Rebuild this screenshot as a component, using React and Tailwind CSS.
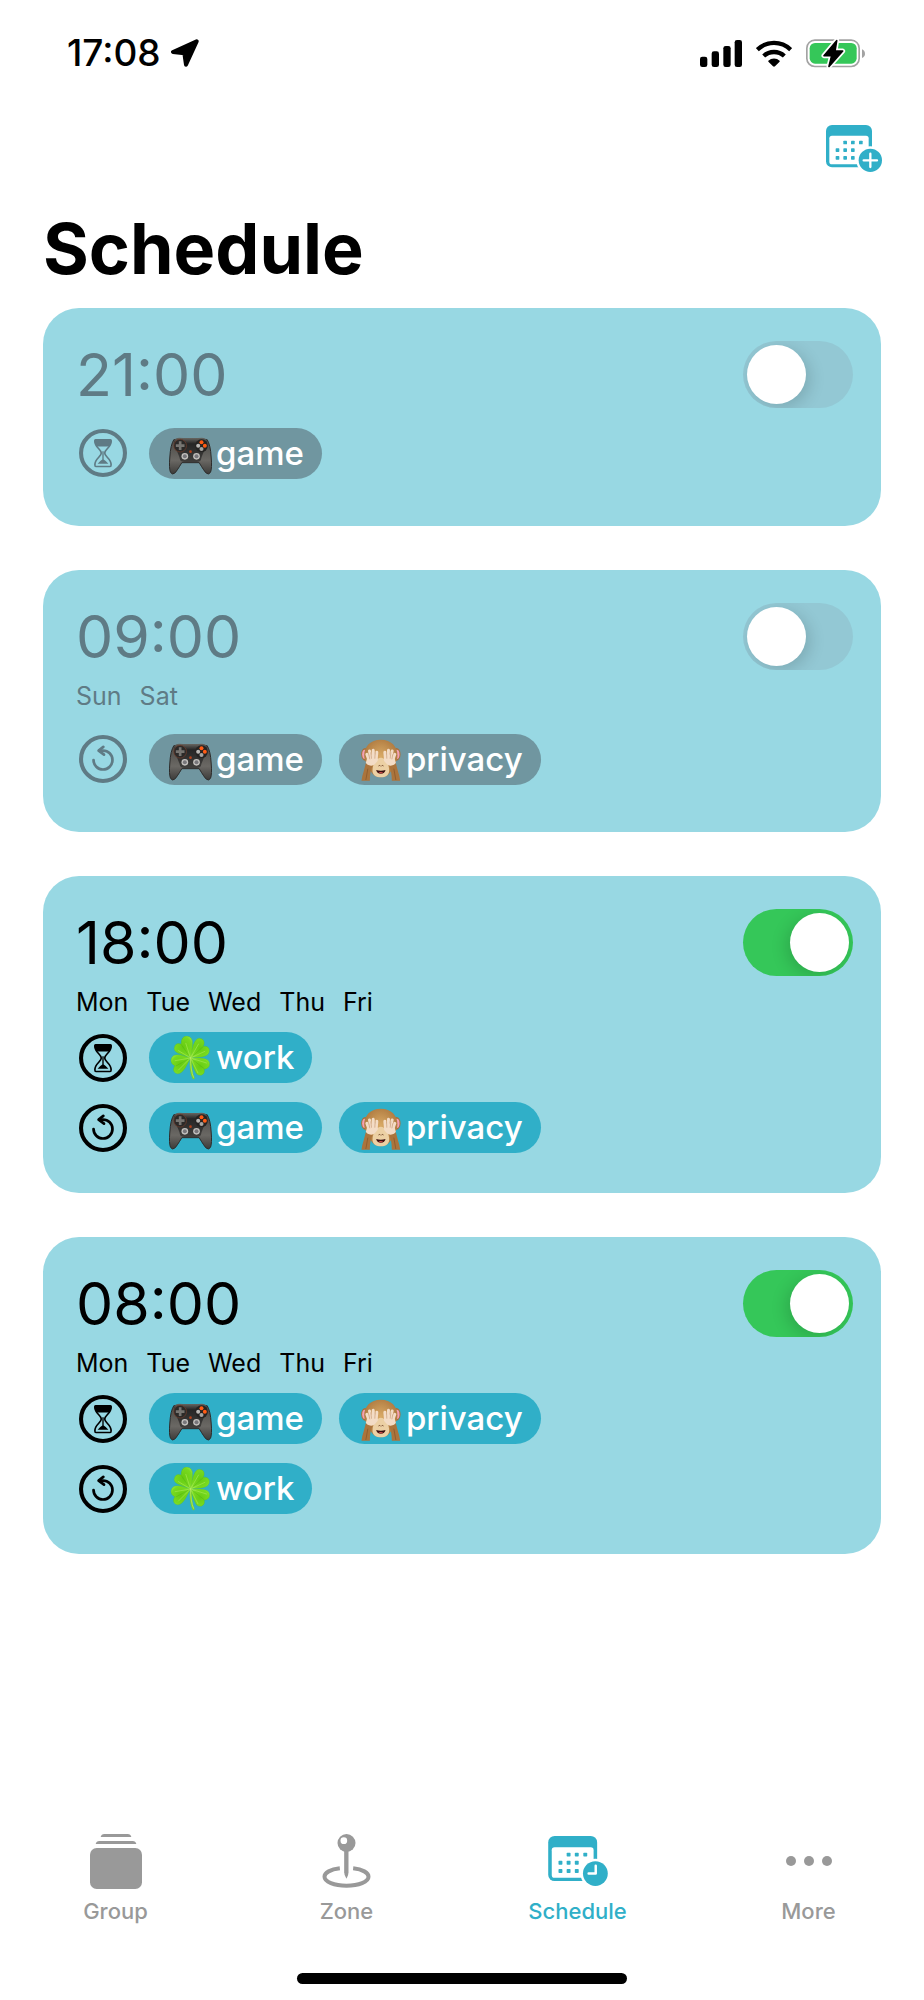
import { useState } from 'react'

const GROUPS = {
  game: { label: 'game', Icon: Gamepad },
  privacy: { label: 'privacy', Icon: Monkey },
  work: { label: 'work', Icon: Clover },
}

const SCHEDULES = [
  { time: '21:00', on: false, days: [], rules: [{ type: 'limit', groups: ['game'] }] },
  { time: '09:00', on: false, days: ['Sun', 'Sat'], rules: [{ type: 'reset', groups: ['game', 'privacy'] }] },
  {
    time: '18:00', on: true, days: ['Mon', 'Tue', 'Wed', 'Thu', 'Fri'],
    rules: [{ type: 'limit', groups: ['work'] }, { type: 'reset', groups: ['game', 'privacy'] }],
  },
  {
    time: '08:00', on: true, days: ['Mon', 'Tue', 'Wed', 'Thu', 'Fri'],
    rules: [{ type: 'limit', groups: ['game', 'privacy'] }, { type: 'reset', groups: ['work'] }],
  },
]

const TABS = [
  { name: 'Group', icon: <StackIcon /> },
  { name: 'Zone', icon: <PinIcon /> },
  { name: 'Schedule', icon: <CalendarIcon badge="clock" className="h-[50px] w-[60px]" /> },
  { name: 'More', icon: <DotsIcon /> },
]

export default function App() {
  const [items, setItems] = useState(SCHEDULES)
  const [tab, setTab] = useState('Schedule')

  function toggle(i) {
    setItems(items.map((s, n) => (n === i ? { ...s, on: !s.on } : s)))
  }

  return (
    <div className="flex min-h-screen flex-col bg-white font-['Inter',sans-serif] text-black">
      <StatusBar />
      <header>
        <div className="flex h-[84px] items-center justify-end px-[42px]">
          <button aria-label="Add schedule">
            <CalendarIcon badge="plus" className="h-[47px] w-[56px] text-[#30afc8]" />
          </button>
        </div>
        <h1 className="px-[43px] text-[70px] leading-[118px] font-bold">Schedule</h1>
      </header>

      <main className="flex flex-1 flex-col gap-11 px-[43px] pb-10">
        {items.map((s, i) => (
          <Card key={s.time} s={s} onToggle={() => toggle(i)} />
        ))}
      </main>

      <nav className="grid grid-cols-4">
        {TABS.map(t => (
          <button
            key={t.name}
            onClick={() => setTab(t.name)}
            className={`flex flex-col items-center gap-2 ${tab === t.name ? 'text-[#30afc8]' : 'text-[#999999]'}`}
          >
            <span className="flex h-14 items-center">{t.icon}</span>
            <span className="text-[22px] leading-7 font-medium">{t.name}</span>
          </button>
        ))}
      </nav>
      <div className="mx-auto mt-12 mb-4 h-[11px] w-[330px] rounded-full bg-black" />
    </div>
  )
}

function Card({ s, onToggle }) {
  return (
    <section className={`rounded-[36px] bg-[#98d8e3] pt-[33px] pr-7 pb-10 pl-[33px] ${s.on ? 'text-black' : 'text-[#5f7b85]'}`}>
      <div className="mb-3 flex items-center justify-between">
        <h2 className="text-[59px] leading-[67px] font-normal">{s.time}</h2>
        <input
          type="checkbox"
          role="switch"
          aria-label={s.time}
          checked={s.on}
          onChange={onToggle}
          className="h-[67px] w-[110px] shrink-0 appearance-none overflow-hidden rounded-full bg-[#93c8d4] p-1 before:block before:size-[59px] before:rounded-full before:bg-white before:shadow-[4px_4px_16px_rgba(0,0,0,0.15)] checked:bg-[#35c759] checked:before:ml-[43px] checked:before:shadow-[-4px_4px_16px_rgba(0,0,0,0.15)]"
        />
      </div>
      {s.days.length > 0 && (
        <div className="mb-4 flex gap-[18px] text-[25px] leading-7">
          {s.days.map(d => <span key={d}>{d}</span>)}
        </div>
      )}
      <div className="flex min-h-[66px] flex-col justify-center gap-[19px]">
        {s.rules.map(r => (
          <div key={r.type} className="flex items-center gap-[22px] pl-[3px]">
            {r.type === 'limit' ? <HourglassIcon /> : <ResetIcon />}
            <div className="flex gap-[17px]">
              {r.groups.map(g => <Pill key={g} group={GROUPS[g]} on={s.on} />)}
            </div>
          </div>
        ))}
      </div>
    </section>
  )
}

function Pill({ group, on }) {
  const { Icon, label } = group
  return (
    <span className={`flex h-[51px] items-center gap-1 rounded-full pr-[18px] pl-5 text-[33px] font-medium text-white ${on ? 'bg-[#30afc8]' : 'bg-[#7096a0]'}`}>
      <Icon />
      <span className="leading-[51px]">{label}</span>
    </span>
  )
}

function StatusBar() {
  return (
    <div className="flex h-[106px] items-center justify-between pr-[59px] pl-[67px]">
      <div className="flex items-center gap-[10px]">
        <span className="text-[37px] leading-[44px] font-medium">17:08</span>
        <svg viewBox="0 0 84 84" className="size-7">
          <path d="M77 7 6 39l34 4 5 34Z" fill="currentColor" stroke="currentColor" strokeWidth="12" strokeLinejoin="round" />
        </svg>
      </div>
      <div className="flex items-center gap-[14px]">
        <svg viewBox="0 0 126 81" className="h-[27px] w-[42px]">
          <rect x="0" y="50" width="22" height="31" rx="7" />
          <rect x="35" y="34" width="22" height="47" rx="7" />
          <rect x="70" y="18" width="22" height="63" rx="7" />
          <rect x="104" y="0" width="22" height="81" rx="7" />
        </svg>
        <svg viewBox="0 0 108 81" className="h-[27px] w-[36px]">
          <g fill="none" stroke="#000" strokeWidth="13">
            <path d="M4 29a72 72 0 0 1 100 0" />
            <path d="M23 48a46 46 0 0 1 62 0" />
          </g>
          <path d="M37 62a26 26 0 0 1 34 0q1 2-1 4L57 79q-3 2-6 0L38 66q-2-2-1-4Z" />
        </svg>
        <svg viewBox="0 0 177 87" className="h-[29px] w-[59px]">
          <rect x="2.500" y="3.500" width="157" height="79" rx="24" fill="none" stroke="#a3a3a3" strokeWidth="5" />
          <rect x="11" y="12" width="141" height="62" rx="16" fill="#35c759" />
          <path d="M168 31q9 4 9 13t-9 13Z" fill="#a3a3a3" />
          <path d="M92 5 54 50h23L69 82l41-46H87Z" fill="#fff" stroke="#fff" strokeWidth="15" strokeLinejoin="round" />
          <path d="M92 5 54 50h23L69 82l41-46H87Z" stroke="#000" strokeWidth="5" strokeLinejoin="round" />
        </svg>
      </div>
    </div>
  )
}

function CalendarIcon({ badge, className }) {
  return (
    <svg viewBox="0 0 168 141" className={className}>
      <rect width="138" height="127" rx="18" fill="currentColor" />
      <rect x="10" y="32" width="118" height="86" rx="8" fill="#fff" />
      <g fill="currentColor">
        {[[57, 52], [80, 52], [104, 52], [34, 75], [57, 75], [80, 75], [34, 98], [57, 98], [80, 98]].map(([x, y]) => (
          <rect key={`${x}-${y}`} x={x - 5} y={y - 5} width="11" height="11" rx="2" />
        ))}
      </g>
      <circle cx="133" cy="106" r="42" fill="#fff" />
      <circle cx="133" cy="106" r="35" fill="currentColor" />
      <path
        d={badge === 'plus' ? 'M133 86v40M113 106h40' : 'M134 84v22h-20'}
        fill="none" stroke="#fff" strokeWidth="7" strokeLinecap="round" strokeLinejoin="round"
      />
    </svg>
  )
}

function StackIcon() {
  return (
    <svg viewBox="0 0 156 165" fill="currentColor" className="h-[55px] w-[52px]">
      <path d="M32 9q2-9 11-9h70q9 0 11 9ZM17 30q2-9 11-9h100q9 0 11 9Z" />
      <rect y="42" width="156" height="123" rx="20" />
    </svg>
  )
}

function PinIcon() {
  return (
    <svg viewBox="0 0 146 162" fill="currentColor" className="h-[54px] w-[49px]">
      <path d="M53 103C25 106 7 116 7 128c0 15 29 27 66 27s66-12 66-27c0-12-18-22-46-25" fill="none" stroke="currentColor" strokeWidth="12" />
      <path d="M66 50h13v65q0 10-6 19-7-9-7-19Z" />
      <circle cx="73" cy="27" r="27" />
      <circle cx="65" cy="20" r="10" fill="#fff" />
    </svg>
  )
}

function DotsIcon() {
  return (
    <svg viewBox="0 0 46 10" fill="currentColor" className="h-[10px] w-[46px]">
      <circle cx="5" cy="5" r="5" />
      <circle cx="23" cy="5" r="5" />
      <circle cx="41" cy="5" r="5" />
    </svg>
  )
}

function HourglassIcon() {
  return (
    <svg viewBox="0 0 142 142" className="size-12 shrink-0">
      <circle cx="71" cy="71" r="65" fill="none" stroke="currentColor" strokeWidth="12" />
      <path
        d="M50 32h42q3 0 3 4c0 19-19 24-19 35s19 16 19 35q0 5-3 5H50q-3 0-3-5c0-19 19-24 19-35S47 55 47 36q0-4 3-4Z"
        fill="none" stroke="currentColor" strokeWidth="5"
      />
      <path d="M49 30h44q4 0 4 5-1 10-8 17H53q-7-7-8-17 0-5 4-5Z" fill="currentColor" />
      <path d="M69 66h4v24q5 3 14 13H55q9-10 14-13Z" fill="currentColor" />
    </svg>
  )
}

function ResetIcon() {
  return (
    <svg viewBox="0 0 142 142" fill="none" stroke="currentColor" className="size-12 shrink-0">
      <circle cx="71" cy="71" r="65" strokeWidth="12" />
      <g strokeWidth="8" strokeLinecap="round" strokeLinejoin="round">
        <path d="M43 74a28 28 0 1 0 28-28H60" />
        <path d="M72 35 58 46l16 12" />
      </g>
    </svg>
  )
}

function Gamepad() {
  return (
    <svg viewBox="0 0 128 132" className="h-11 w-[43px] shrink-0" aria-hidden="true">
      <defs>
        <linearGradient id="pad-grip" x1="0" y1="0" x2="0" y2="1">
          <stop offset="0" stopColor="#4a4946" />
          <stop offset="0.6" stopColor="#6a6864" />
          <stop offset="1" stopColor="#3c3b39" />
        </linearGradient>
        <linearGradient id="pad-body" x1="0" y1="0" x2="0" y2="1">
          <stop offset="0" stopColor="#6b6964" />
          <stop offset="0.25" stopColor="#262626" />
          <stop offset="1" stopColor="#403f3d" />
        </linearGradient>
      </defs>
      <path d="M14 26Q4 42 2 78q-3 34 2 46 5 8 12 3 6-5 22-32h52q16 27 22 32 7 5 12-3 5-12 2-46-2-36-12-52Z" fill="url(#pad-grip)" stroke="#2c2b2a" strokeWidth="3" />
      <path d="M14 30q4-10 16-10l12 1h44l12-1q12 0 16 10l-2 22q-12 12-17 36-4 5-12 5H45q-8 0-12-5-5-24-17-36Z" fill="url(#pad-body)" />
      <circle cx="33" cy="44" r="19" fill="#2b2a29" stroke="#75402c" strokeWidth="2" />
      <path d="M29 31h8v9h9v8h-9v9h-8v-9h-9v-8h9Z" fill="#777571" />
      <circle cx="97" cy="44" r="19" fill="#242322" />
      <circle cx="97" cy="34" r="6" fill="#ff5b14" />
      <circle cx="107" cy="44" r="6" fill="#ff5b14" />
      <circle cx="97" cy="54" r="6" fill="#a7a5a2" />
      <circle cx="87" cy="44" r="6" fill="#bbb9b6" />
      <circle cx="64" cy="62" r="4" fill="#b2421c" />
      <circle cx="47" cy="76" r="10" fill="#c3c1be" />
      <circle cx="47" cy="76" r="6" fill="#77767a" />
      <circle cx="82" cy="76" r="10" fill="#c3c1be" />
      <circle cx="82" cy="76" r="6" fill="#77767a" />
    </svg>
  )
}

function Monkey() {
  return (
    <svg viewBox="0 0 128 132" className="h-11 w-[43px] shrink-0" aria-hidden="true">
      <defs>
        <radialGradient id="monkey-head" cx="0.5" cy="0.45" r="0.6">
          <stop offset="0" stopColor="#d9aa66" />
          <stop offset="1" stopColor="#a8733a" />
        </radialGradient>
      </defs>
      <ellipse cx="18" cy="52" rx="12" ry="19" fill="#a8713b" />
      <ellipse cx="17" cy="52" rx="8" ry="14" fill="#f5a0b4" />
      <ellipse cx="112" cy="52" rx="12" ry="19" fill="#a8713b" />
      <ellipse cx="113" cy="52" rx="8" ry="14" fill="#f5a0b4" />
      <path d="M65 8c32 0 50 21 50 47 0 14-7 24-14 36-6 18-18 30-36 30s-30-12-36-30c-7-12-14-22-14-36C15 29 33 8 65 8Z" fill="url(#monkey-head)" />
      <path d="M65 62c13 0 25 20 25 39 0 13-11 20-25 20s-25-7-25-20c0-19 12-39 25-39Z" fill="#ecd0a4" />
      <path d="M59 86q2-2 4 0m5 0q2-2 4 0" fill="none" stroke="#6b3f23" strokeWidth="3" strokeLinecap="round" />
      <path d="M51 99q14 5 28 0-2 11-14 11t-14-11Z" fill="#3b1010" />
      <path d="M58 107q7-4 14 0-7 4-14 0Z" fill="#d9534f" />
      <path d="M20 78q9 8 20 9-8 16-8 44H7q1-12 6-26 4-14 7-27Z" fill="#ab743c" />
      <path d="M110 78q-9 8-20 9 8 16 8 44h25q-1-12-6-26-4-14-7-27Z" fill="#ab743c" />
      <path d="M20 129l6-34M110 129l-6-34" stroke="#855326" strokeWidth="2" />
      <g stroke="#f3dcc6" strokeWidth="9" strokeLinecap="round">
        <path d="M29 68 23 52M36 64 31 42M44 64 42 40M51 68 53 46M101 68l6-16M94 64l5-22M86 64l2-24M79 68l-2-22" />
      </g>
      <path d="M24 63q16-8 32 2 1 7-6 13-5 8-14 8-13-2-16-9Z" fill="#f3dcc6" />
      <path d="M106 63q-16-8-32 2-1 7 6 13 5 8 14 8 13-2 16-9Z" fill="#f3dcc6" />
      <path d="m35 46 2 19m11-19-1 19m48-19-2 19m-11-19 1 19M29 52l3 15m69-15-3 15" stroke="#c79a76" strokeWidth="2" />
    </svg>
  )
}

function Clover() {
  return (
    <svg viewBox="0 0 128 132" className="h-11 w-[43px] shrink-0" aria-hidden="true">
      <defs>
        <radialGradient id="clover-leaf" cx="0.5" cy="0.5" r="0.65">
          <stop offset="0" stopColor="#66cc12" />
          <stop offset="0.7" stopColor="#78da20" />
          <stop offset="1" stopColor="#a4ee4c" />
        </radialGradient>
      </defs>
      <path d="M65 66q-2 40 8 60" fill="none" stroke="#79cf2a" strokeWidth="7" strokeLinecap="round" />
      <g fill="url(#clover-leaf)" stroke="#58b817" strokeWidth="1">
        <path d="M64 66C48 57 14 54 15 37q3-19 21-13 0-24 17-24 18 2 17 24 0 24-6 42Z" />
        <path d="M64 66c4-18 8-59 27-59 18 1 15 20 11 24 20-4 23 16 13 25-12 10-35 7-51 10Z" />
        <path d="M64 66c-9 17-23 51-40 47-17-5-10-20-7-24-16-6-14-25-2-31 15-6 34 4 49 8Z" />
        <path d="M64 66c15 2 48-5 56 12 6 18-12 22-15 21 5 18-15 25-24 13-9-14-12-32-17-46Z" />
      </g>
      <path d="M64 66 36 25m28 41 38-34M64 66 20 90m44-24 41 32" fill="none" stroke="#45a412" strokeWidth="1" />
      <path d="M64 66 50 22m14 44 24-42M64 66l-46 8m46-8 22 44M64 66l48 15M64 66l-36 36M64 66 28 44m36 22 43-20" fill="none" stroke="#a5e852" strokeWidth="2" strokeLinecap="round" />
      <path d="M64 64q0 40 9 60" fill="none" stroke="#c0ef70" strokeWidth="2" strokeLinecap="round" />
    </svg>
  )
}
